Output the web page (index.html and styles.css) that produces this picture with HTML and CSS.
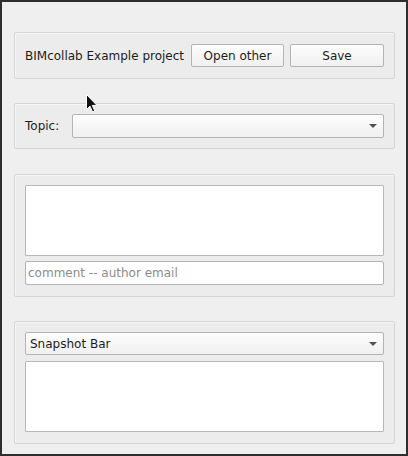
FILE: index.html
```html
<!DOCTYPE html>
<html>
<head>
<meta charset="utf-8">
<link rel="stylesheet" href="styles.css">
</head>
<body>
<div class="frame">
  <div class="group g-project">
    <span class="label">BIMcollab Example project</span>
    <button class="btn btn-open">Open other</button>
    <button class="btn btn-save">Save</button>
  </div>
  <div class="group g-topic">
    <span class="label">Topic:</span>
    <div class="combo combo-topic"><span class="combo-text"></span><span class="arrow"></span></div>
  </div>
  <div class="group g-comment">
    <div class="textbox tb-comments"></div>
    <div class="lineedit"><span class="placeholder">comment -- author email</span></div>
  </div>
  <div class="group g-snapshot">
    <div class="combo combo-snap"><span class="combo-text">Snapshot Bar</span><span class="arrow"></span></div>
    <div class="textbox tb-snap"></div>
  </div>
  <svg class="cursor" width="12" height="19" viewBox="0 0 12 19">
    <path d="M0.5 0.5 L0.5 15.5 L4 12.2 L6.6 18 L8.8 17 L6.3 11.4 L11 11.4 Z" fill="#111" stroke="#fff" stroke-width="1"/>
  </svg>
</div>
</body>
</html>
```

FILE: styles.css
```css
* { box-sizing: border-box; }
html, body { margin: 0; padding: 0; }
body {
  font-family: "DejaVu Sans", "Liberation Sans", sans-serif;
  font-size: 12px;
  color: #1c1c1c;
  background: #2e2e2e;
}
.frame {
  position: relative;
  width: 408px;
  height: 456px;
  border: 2px solid #2e2e2e;
  background: #efefef;
  padding: 30px 11px 0 12px;
  display: flex;
  flex-direction: column;
}
.group {
  border: 1px solid #d5d5d5;
  background: #ececec;
  box-shadow: inset 1px 1px 0 #f7f7f7;
  border-radius: 2px;
  padding: 0 10px;
}
.g-project {
  height: 47px;
  display: flex;
  align-items: center;
}
.g-project .label { flex: 1; white-space: nowrap; }
.btn {
  font-family: inherit;
  font-size: 12px;
  color: #1c1c1c;
  height: 23px;
  border: 1px solid #b4b4b4;
  border-radius: 2px;
  background: linear-gradient(#fdfdfd, #f0f0f0);
  padding: 0;
  margin: 0;
}
.btn-open { width: 93px; }
.btn-save { width: 94px; margin-left: 6px; }
.g-topic {
  margin-top: 24px;
  height: 46px;
  display: flex;
  align-items: center;
}
.g-topic .label { width: 47px; }
.combo {
  position: relative;
  height: 24px;
  border: 1px solid #b4b4b4;
  border-radius: 2px;
  background: linear-gradient(#fdfdfd, #f0f0f0);
  display: flex;
  align-items: center;
  padding-left: 4px;
}
.combo-topic { flex: 1; }
.combo-text { flex: 1; }
.arrow {
  width: 0;
  height: 0;
  border-left: 4px solid transparent;
  border-right: 4px solid transparent;
  border-top: 4px solid #505050;
  margin-right: 6px;
}
.g-comment {
  margin-top: 25px;
  height: 123px;
  padding-top: 10px;
  display: flex;
  flex-direction: column;
}
.textbox {
  background: #ffffff;
  border: 1px solid #b8b8b8;
  border-radius: 1px;
  height: 71px;
}
.lineedit {
  margin-top: 5px;
  height: 24px;
  background: #fff;
  border: 1px solid #b4b4b4;
  border-radius: 2px;
  display: flex;
  align-items: center;
  padding-left: 2px;
}
.placeholder { color: #8c8c8c; }
.g-snapshot {
  margin-top: 24px;
  height: 123px;
  padding-top: 10px;
  display: flex;
  flex-direction: column;
}
.combo-snap { height: 23px; }
.tb-snap { margin-top: 6px; }
.cursor {
  position: absolute;
  left: 84px;
  top: 92px;
}
```
